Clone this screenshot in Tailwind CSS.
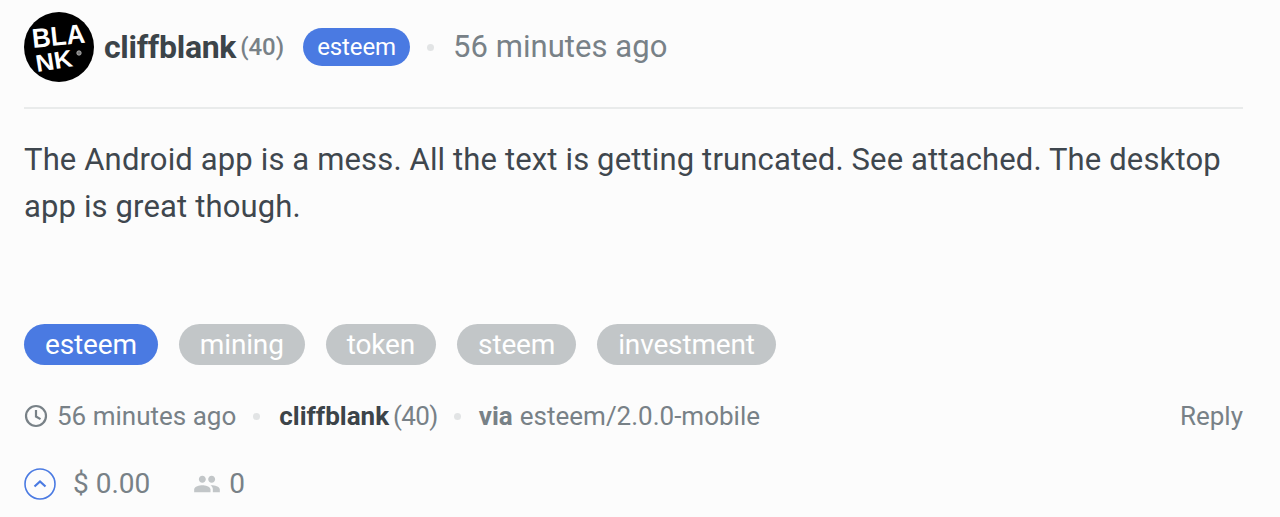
<!DOCTYPE html>
<html lang="en">
<head>
  <meta charset="UTF-8" />
  <title>cliffblank comment</title>
  <script src="https://cdn.jsdelivr.net/npm/@tailwindcss/browser@4"></script>
</head>
<body class="bg-[#fcfcfc] font-[Roboto,sans-serif] h-[517px] overflow-hidden">
  <div class="px-6 pt-3">
    <!-- Header -->
    <header class="flex items-center h-[70px]">
      <svg class="w-[70px] h-[70px] shrink-0" viewBox="0 0 70 70">
        <circle cx="35" cy="35" r="35" fill="#000" />
        <text x="9" y="36" font-family="Liberation Sans" font-weight="700" font-size="27" fill="#fff" transform="rotate(-6 9 36)" textLength="53" lengthAdjust="spacingAndGlyphs">BLA</text>
        <text x="13" y="60" font-family="Liberation Sans" font-weight="700" font-size="24" fill="#fff" transform="rotate(-9 13 60)" textLength="37" lengthAdjust="spacingAndGlyphs">NK</text>
        <circle cx="55" cy="41" r="2.2" fill="#777" stroke="#bbb" stroke-width="0.8" />
      </svg>
      <span class="ml-[10px] text-[32px] font-bold text-[#3c4449] tracking-[-0.3px]">cliffblank</span>
      <span class="ml-[4px] text-[24px] font-medium text-[#788187]">(40)</span>
      <span class="ml-[19px] h-[38px] px-[14px] flex items-center rounded-[19px] bg-[#4a7ae2] text-white text-[24px] leading-none tracking-[-0.1px]">esteem</span>
      <span class="ml-[17px] w-[7px] h-[7px] rounded-full bg-[#e2e4e5]"></span>
      <span class="ml-[19px] text-[31px] tracking-[0.05px] text-[#788187]">56 minutes ago</span>
    </header>

    <div class="mt-[25px] h-[2px] mr-[13px] bg-[#e9ebeb]"></div>

    <!-- Body -->
    <p class="mt-[27px] text-[31px] leading-[47px] tracking-[0.14px] text-[#3f474e] w-[1230px]">The Android app is a mess. All the text is getting truncated. See attached. The desktop app is great though.</p>

    <!-- Tags -->
    <div class="mt-[94px] flex gap-[21px] text-[28px] tracking-[-0.15px] text-white">
      <span class="h-[41px] px-[21px] flex items-center rounded-[21px] bg-[#4a7ae2]">esteem</span>
      <span class="h-[41px] px-[21px] flex items-center rounded-[21px] bg-[#c2c6c8]">mining</span>
      <span class="h-[41px] px-[21px] flex items-center rounded-[21px] bg-[#c2c6c8]">token</span>
      <span class="h-[41px] px-[21px] flex items-center rounded-[21px] bg-[#c2c6c8]">steem</span>
      <span class="h-[41px] px-[21px] flex items-center rounded-[21px] bg-[#c2c6c8]">investment</span>
    </div>

    <!-- Meta -->
    <div class="mt-[30px] mr-[13px] flex items-center h-[42px] text-[26px] text-[#788187]">
      <svg class="w-6 h-6 shrink-0" viewBox="0 0 24 24" fill="none" stroke="#788187" stroke-width="2.2">
        <circle cx="12" cy="12" r="10" />
        <path d="M12 6v6.5l4.5 2.6" />
      </svg>
      <span class="ml-[9px]">56 minutes ago</span>
      <span class="ml-[17px] w-[7px] h-[7px] rounded-full bg-[#e2e4e5]"></span>
      <span class="ml-[19px] font-bold text-[#3c4449]">cliffblank</span>
      <span class="ml-[4px] tracking-[-0.6px]">(40)</span>
      <span class="ml-[16px] w-[7px] h-[7px] rounded-full bg-[#e2e4e5]"></span>
      <span class="ml-[18px] font-bold">via</span>
      <span class="ml-[7px]">esteem/2.0.0-mobile</span>
      <span class="ml-auto">Reply</span>
    </div>

    <!-- Votes -->
    <div class="mt-[31px] flex items-center h-[32px] text-[28px] text-[#788187]">
      <svg class="w-[32px] h-[32px] shrink-0" viewBox="0 0 32 32" fill="none" stroke="#4a7ae2">
        <circle cx="16" cy="16" r="15" stroke-width="1.6" />
        <path d="M10.5 18.5 16 13.5l5.5 5" stroke-width="2.2" />
      </svg>
      <span class="ml-[17px]">$ 0.00</span>
      <svg class="ml-[43px] w-[28px] h-[28px] shrink-0" viewBox="0 0 24 24" fill="#c2c6c8">
        <path d="M16 11c1.66 0 2.99-1.34 2.99-3S17.66 5 16 5s-3 1.34-3 3 1.34 3 3 3zm-8 0c1.66 0 2.99-1.34 2.99-3S9.66 5 8 5 5 6.34 5 8s1.34 3 3 3zm0 2c-2.33 0-7 1.17-7 3.5V19h14v-2.5C15 14.17 10.33 13 8 13zm8 0c-.29 0-.62.02-.97.05 1.16.84 1.97 1.97 1.97 3.45V19h6v-2.5c0-2.33-4.67-3.5-7-3.5z" />
      </svg>
      <span class="ml-[8px]">0</span>
    </div>
  </div>
</body>
</html>
